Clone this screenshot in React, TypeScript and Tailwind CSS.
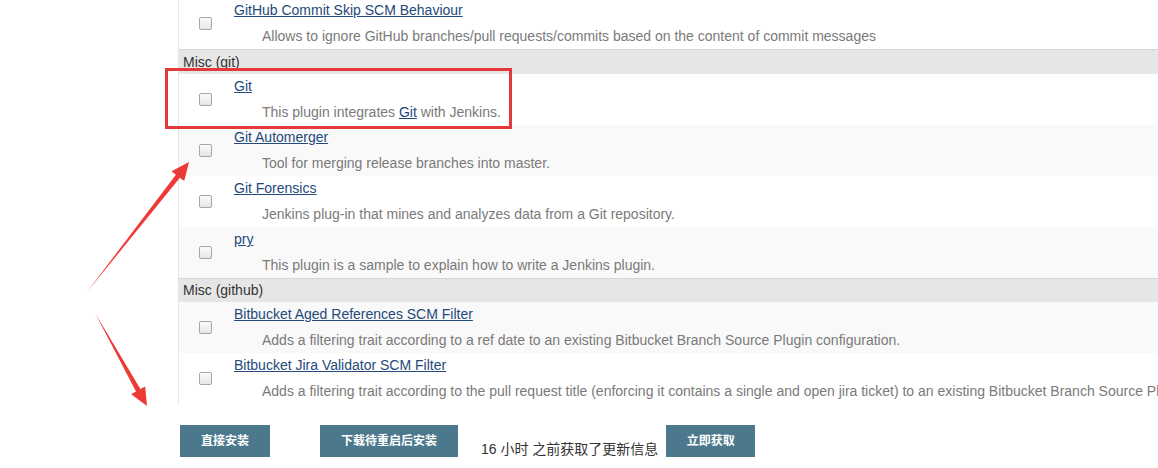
import React from "react";

type Row = { title: string; desc: React.ReactNode; alt?: boolean };

const Checkbox = () => (
  <div className="w-[13px] h-[13px] rounded-[2px] border border-[#a6a6a6] bg-gradient-to-b from-[#fbfbfb] to-[#e6e6e6]" />
);

const PluginRow = ({ title, desc, alt }: Row) => (
  <div className={`flex h-[51px] ${alt ? "bg-[#f9f9f9]" : "bg-white"}`}>
    <div className="w-[55px] shrink-0 flex items-center pl-[20px]">
      <Checkbox />
    </div>
    <div className="flex-1 min-w-0 overflow-hidden pt-[4px] whitespace-nowrap">
      <div className="leading-[16px]">
        <span className="underline text-[#25497a]">{title}</span>
      </div>
      <div className="leading-[16px] mt-[10px] pl-[28px] text-[#7a7a7a]">{desc}</div>
    </div>
  </div>
);

const Category = ({ label, h }: { label: string; h: string }) => (
  <div className={`${h} bg-[#e6e6e6] border-t border-[#d6d6d6] flex items-center pl-[4px] text-[#333]`}>
    {label}
  </div>
);

export default function App() {
  return (
    <div
      className="relative w-[1158px] h-[468px] overflow-hidden bg-white text-[14px]"
      style={{ fontFamily: '"Liberation Sans", Arial, "Noto Sans CJK SC", sans-serif' }}
    >
      <div className="ml-[178px] -mt-[2px] border-l border-[#e6e6e6]">
        <PluginRow
          title="GitHub Commit Skip SCM Behaviour"
          desc="Allows to ignore GitHub branches/pull requests/commits based on the content of commit messages"
        />
        <Category label="Misc (git)" h="h-[25px]" />
        <PluginRow
          title="Git"
          desc={
            <>
              This plugin integrates <span className="underline text-[#25497a]">Git</span> with Jenkins.
            </>
          }
        />
        <PluginRow title="Git Automerger" desc="Tool for merging release branches into master." alt />
        <PluginRow title="Git Forensics" desc="Jenkins plug-in that mines and analyzes data from a Git repository." />
        <PluginRow title="pry" desc="This plugin is a sample to explain how to write a Jenkins plugin." alt />
        <Category label="Misc (github)" h="h-[24px]" />
        <PluginRow
          title="Bitbucket Aged References SCM Filter"
          desc="Adds a filtering trait according to a ref date to an existing Bitbucket Branch Source Plugin configuration."
          alt
        />
        <PluginRow
          title="Bitbucket Jira Validator SCM Filter"
          desc="Adds a filtering trait according to the pull request title (enforcing it contains a single and open jira ticket) to an existing Bitbucket Branch Source Plugin configuration."
        />
      </div>

      <div className="flex items-end ml-[180px] mt-[21px]">
        <button className="w-[90px] h-[32px] bg-[#4b788c] text-white text-[12px] font-bold">直接安装</button>
        <button className="ml-[50px] w-[138px] h-[32px] bg-[#4b788c] text-white text-[12px] font-bold">
          下载待重启后安装
        </button>
        <span className="ml-[23px] leading-[16px] text-[#333] whitespace-nowrap">16 小时 之前获取了更新信息</span>
        <button className="ml-[8px] w-[89px] h-[32px] bg-[#4b788c] text-white text-[12px] font-bold">立即获取</button>
      </div>

      {/* annotations */}
      <div className="absolute left-[165px] top-[68px] w-[347px] h-[61px] border-[3px] border-[#e3393a]" />
      <svg className="absolute left-0 top-0" width="1158" height="468" viewBox="0 0 1158 468">
        <polygon
          points="87,292 175.9,174.7 171.6,171.3 189,162 184.2,181.1 179.9,177.7"
          fill="#ee3a36"
        />
        <polygon
          points="95,313 140.4,389.1 145.2,386.4 147,406 131.2,394.2 136,391.5"
          fill="#ee3a36"
        />
      </svg>
    </div>
  );
}
